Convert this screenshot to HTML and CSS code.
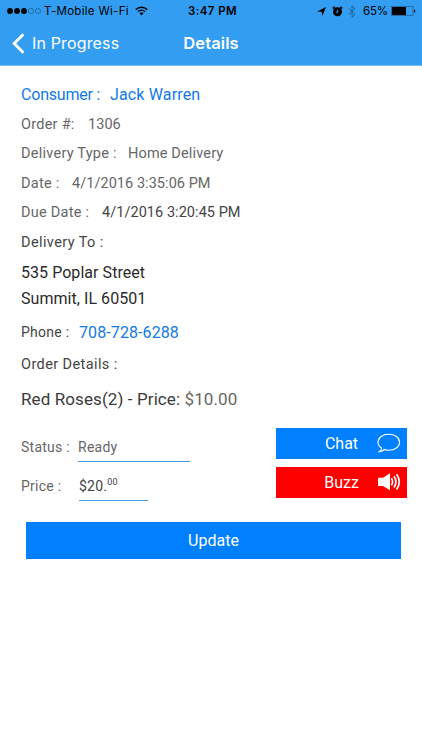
FILE: index.html
```html
<!DOCTYPE html>
<html lang="en">
<head>
    <meta charset="UTF-8">
    <meta name="viewport" content="width=device-width, initial-scale=1.0">
    <title>Details</title>
    <link rel="stylesheet" href="styles.css">
</head>
<body>

    <header class="header">
        <!-- Status bar -->
        <div class="status-bar">
            <div class="status-left">
                <svg class="signal" width="35" height="8" viewBox="0 0 35 8">
                    <circle cx="3" cy="4" r="2.9"/>
                    <circle cx="10" cy="4" r="2.9"/>
                    <circle cx="17" cy="4" r="2.9"/>
                    <circle class="off" cx="24" cy="4" r="2.6"/>
                    <circle class="off" cx="31" cy="4" r="2.6"/>
                </svg>
                <span class="carrier">T-Mobile Wi-Fi</span>
                <svg class="wifi" width="13" height="10" viewBox="0 0 13 10">
                    <path d="M0.8 3.6a8.2 8.2 0 0 1 11.4 0M2.9 5.8a5.2 5.2 0 0 1 7.2 0" fill="none" stroke="#000" stroke-width="1.5"/>
                    <path d="M6.5 9.4L4.5 7.3a2.9 2.9 0 0 1 4 0z"/>
                </svg>
            </div>
            <div class="clock">3:47 PM</div>
            <div class="status-right">
                <svg class="location" width="9" height="9" viewBox="0 0 9 9">
                    <path d="M9 0L5.3 9L4.6 4.7L0 4.6z"/>
                </svg>
                <svg class="alarm" width="11" height="11" viewBox="0 0 11 11">
                    <circle cx="5.5" cy="5.8" r="4.5"/>
                    <path d="M0.7 2.5L2.9 0.9M10.3 2.5L8.1 0.9" stroke="#000" stroke-width="1.6"/>
                    <path d="M5.8 3.6V6.2H3.8" fill="none" stroke="#329df1" stroke-width="1"/>
                </svg>
                <svg class="bluetooth" width="8" height="13" viewBox="0 0 8 13">
                    <path d="M0.8 3.5L7 9.4L4 12.2V0.8L7 3.6L0.8 9.5" fill="none" stroke="#1c5d91" stroke-width="0.9"/>
                </svg>
                <span class="percent">65%</span>
                <svg class="battery" width="25" height="10" viewBox="0 0 25 10">
                    <rect x="0.5" y="0.5" width="21.5" height="9" fill="none" stroke="#1b5a8c" stroke-width="0.7"/>
                    <rect x="1" y="1" width="14" height="8"/>
                    <path d="M23 3.2c1.8 0.4 1.8 3.2 0 3.6z"/>
                </svg>
            </div>
        </div>

        <!-- Navigation bar -->
        <div class="nav-bar">
            <a class="back">
                <svg width="13" height="21" viewBox="0 0 13 21">
                    <path d="M11.4 1.2L2.2 10.5L11.4 19.8" fill="none" stroke="#fff" stroke-width="2.9"/>
                </svg>
                <span>In Progress</span>
            </a>
            <h1 class="title">Details</h1>
        </div>
    </header>

    <main class="details">
        <div class="row consumer">
            <span class="label">Consumer :</span>
            <span class="value">Jack Warren</span>
        </div>
        <div class="row order">
            <span class="label">Order #:</span>
            <span class="value">1306</span>
        </div>
        <div class="row type">
            <span class="label">Delivery Type :</span>
            <span class="value">Home Delivery</span>
        </div>
        <div class="row date">
            <span class="label">Date :</span>
            <span class="value">4/1/2016 3:35:06 PM</span>
        </div>
        <div class="row due">
            <span class="label">Due Date :</span>
            <span class="value">4/1/2016 3:20:45 PM</span>
        </div>
        <div class="row heading">
            <span class="label">Delivery To :</span>
        </div>
        <address class="address">
            <div class="street">535 Poplar Street</div>
            <div class="city">Summit, IL 60501</div>
        </address>
        <div class="row phone">
            <span class="label">Phone :</span>
            <a class="value">708-728-6288</a>
        </div>
        <div class="row heading order-details">
            <span class="label">Order Details :</span>
        </div>
        <div class="item">
            <span class="item-name">Red Roses(2) - Price:</span>
            <span class="item-price">$10.00</span>
        </div>

        <div class="controls">
            <div class="fields">
                <div class="field status">
                    <span class="label">Status :</span>
                    <span class="input">Ready</span>
                </div>
                <div class="field price">
                    <span class="label">Price :</span>
                    <span class="input">$20.<sup>00</sup></span>
                </div>
            </div>
            <div class="actions">
                <button class="action chat">
                    <span>Chat</span>
                    <svg width="24" height="20" viewBox="0 0 24 20">
                        <path d="M4.7 15.2C2.4 13.7 1 11.6 1 9.3C1 4.8 5.8 1.2 11.8 1.2S22.6 4.8 22.6 9.3S17.8 17.3 11.8 17.3C10.2 17.3 8.7 17 7.4 16.5C6 17.9 4.2 18.7 2.2 18.8C3.6 17.9 4.5 16.7 4.7 15.2z" fill="none" stroke="#fff" stroke-width="1.1"/>
                    </svg>
                </button>
                <button class="action buzz">
                    <span>Buzz</span>
                    <svg width="24" height="20" viewBox="0 0 24 20">
                        <path d="M1 5.8H6L13 1.2V18.2L6 13.9H1z" fill="#fff"/>
                        <path d="M14.4 6.3q2.4 3.5 0 7M17 4.2q4 5.6 0 11.2M19.6 2.2q5.4 7.6 0 15.2" fill="none" stroke="#fff" stroke-width="1.7"/>
                    </svg>
                </button>
            </div>
        </div>

        <button class="update">Update</button>
    </main>

</body>
</html>
```
FILE: styles.css
```css
* {
    box-sizing: border-box;
}

body {
    margin: 0;
    background-color: #fff;
    font-family: Roboto, sans-serif;
    color: #666;
}

/* Header */
.header {
    height: 66px;
    background-color: #329df1;
    border-bottom: 1px solid #7cbdf4;
}

.status-bar {
    display: grid;
    grid-template-columns: 1fr auto 1fr;
    align-items: center;
    height: 22px;
    padding: 0 6px 0 8px;
    font-family: Inter, sans-serif;
    font-size: 11.5px;
    color: #000;
}

.status-left,
.status-right {
    display: flex;
    align-items: center;
}

.status-left {
    margin-left: -1px;
}

.status-right {
    justify-content: flex-end;
}

.signal .off {
    fill: none;
    stroke: #1b5a8c;
    stroke-width: 0.7;
}

.carrier {
    margin: 0 6px 0 2px;
    letter-spacing: 0.3px;
}

.clock {
    padding-left: 1px;
    font-weight: 600;
    letter-spacing: 0.4px;
}

.alarm {
    margin-left: 6px;
}

.bluetooth {
    margin: 0 7px 0 5px;
}

.percent {
    letter-spacing: -0.1px;
}

.battery {
    margin-left: 3px;
}

.nav-bar {
    display: grid;
    grid-template-columns: 1fr auto 1fr;
    align-items: center;
    height: 42px;
    padding: 0 12px;
    font-family: Inter, sans-serif;
    color: #fff;
}

.back {
    display: flex;
    align-items: center;
    gap: 7px;
    font-size: 16px;
    letter-spacing: 0.15px;
}

.title {
    margin: 0;
    font-size: 16.5px;
    font-weight: 600;
    letter-spacing: 0.1px;
}

/* Order details */
.details {
    padding: 14px 15px 0 21px;
}

.row {
    display: flex;
    align-items: center;
    height: 29.5px;
    font-size: 14.5px;
    letter-spacing: 0.25px;
    white-space: nowrap;
}

.row .label {
    flex: none;
}

.row .value {
    letter-spacing: 0.05px;
}

.consumer {
    font-size: 16px;
    color: #1379e8;
}

.consumer .label {
    width: 89px;
    letter-spacing: -0.2px;
}

.consumer .value {
    letter-spacing: 0.15px;
}

.order .label { width: 67px; }
.type .label { width: 107px; }
.date .label { width: 51px; }
.due .label { width: 81px; }
.phone .label { width: 58px; }

.type .value {
    letter-spacing: 0.15px;
}

.due .value {
    color: #444;
}

.heading,
.phone {
    color: #444;
}

.heading {
    letter-spacing: 0.4px;
}

.address {
    padding-top: 3px;
    font-size: 16px;
    font-style: normal;
    line-height: 26px;
    letter-spacing: 0.05px;
    color: #2a2a2a;
}

.phone {
    height: 34px;
    margin-top: 3px;
    font-size: 14px;
}

.phone .value {
    font-size: 16px;
    letter-spacing: 0.1px;
    color: #1379e8;
}

.order-details {
    margin-top: 1px;
}

.item {
    height: 40px;
    font-size: 17px;
    line-height: 38px;
    letter-spacing: 0.1px;
    color: #3a3a3a;
}

.item-price {
    color: #666;
}

/* Status, price and the buttons beside them */
.controls {
    display: flex;
    justify-content: space-between;
    margin-top: 8px;
}

.field {
    display: flex;
    align-items: center;
    height: 39px;
    font-size: 14px;
    letter-spacing: 0.25px;
}

.field .label {
    width: 57px;
}

.input {
    width: 112px;
    height: 30px;
    line-height: 30px;
    border-bottom: 1px solid #4a97e8;
}

.price .input {
    width: 69px;
    margin-left: 1px;
    color: #444;
}

.input sup {
    font-size: 9px;
    line-height: 0;
}

.actions {
    display: flex;
    flex-direction: column;
    gap: 8px;
}

.action,
.update {
    border: 0;
    border-radius: 0;
    color: #fff;
    font-family: Roboto, sans-serif;
    font-size: 16px;
    letter-spacing: 0;
}

.action {
    display: grid;
    grid-template-columns: 1fr 24px;
    align-items: center;
    width: 131px;
    height: 31px;
    padding: 0 6px 0 30px;
}

.chat,
.update {
    background-color: #007fff;
}

.buzz {
    background-color: #f00;
}

.update {
    display: block;
    width: 375px;
    height: 37px;
    margin: 16px 0 0 5px;
}
```
